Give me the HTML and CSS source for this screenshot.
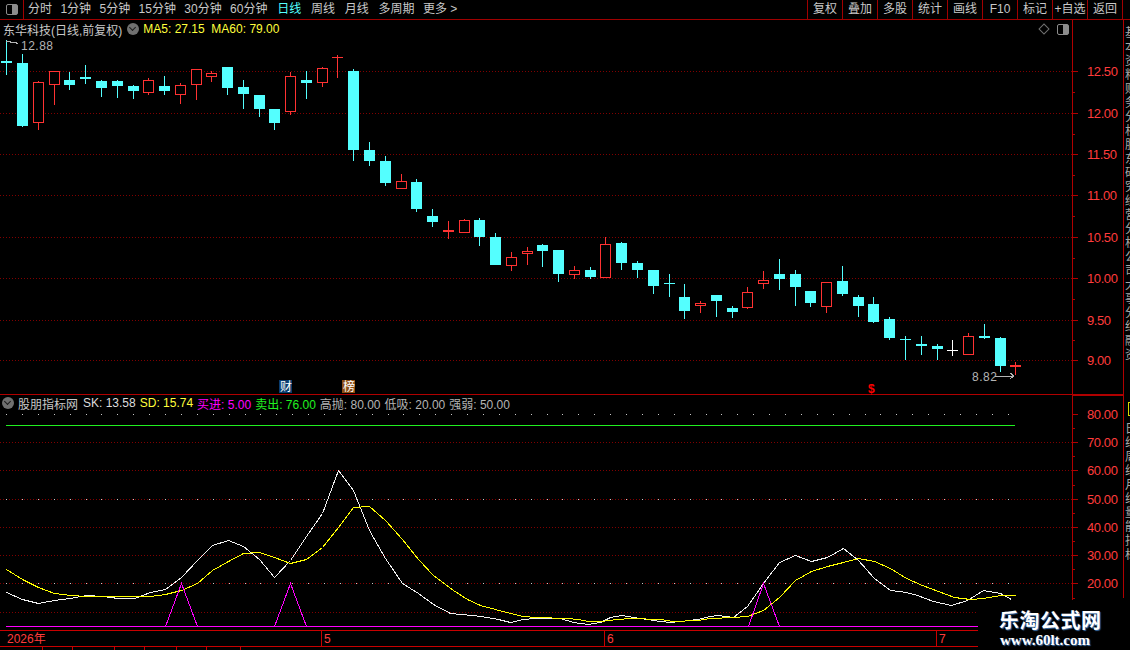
FILE: index.html
```html
<html>
	<head>
		<title>东华科技</title>
		<link rel="stylesheet" href="styles.css">
	</head>
	<body>
		<div class="app">
			<div class="topbar">
				<div class="layout-btn"><span class="split-icon"></span></div>
				<div class="periods">
					<span class="period">分时</span>
					<span class="period">1分钟</span>
					<span class="period">5分钟</span>
					<span class="period">15分钟</span>
					<span class="period">30分钟</span>
					<span class="period wide">60分钟</span>
					<span class="period active wide">日线</span>
					<span class="period wide">周线</span>
					<span class="period wide">月线</span>
					<span class="period">多周期</span>
					<span class="period">更多 &gt;</span>
				</div>
				<div class="tools">
					<span class="tool">复权</span>
					<span class="tool">叠加</span>
					<span class="tool">多股</span>
					<span class="tool">统计</span>
					<span class="tool">画线</span>
					<span class="tool">F10</span>
					<span class="tool">标记</span>
					<span class="tool">+自选</span>
					<span class="tool">返回</span>
				</div>
			</div>
			<div class="workspace">
				<div class="plots">
					<div class="legend legend-main">
						<span class="stock-name">东华科技(日线,前复权)</span>
						<span class="chevron"></span>
						<span class="yellow">MA5: 27.15&nbsp;&nbsp;MA60: 79.00</span>
						<span class="legend-icons">
							<span class="diamond"></span>
							<span class="split-icon"></span>
						</span>
					</div>
					<svg id="price-chart" class="chart chart-main" viewBox="0 40 1123 354"></svg>
					<div class="legend legend-sub">
						<span class="chevron"></span>
						<span class="indicator-name">股朋指标网</span>
						<span class="white">SK: 13.58</span>
						<span class="yellow">SD: 15.74</span>
						<span class="magenta">买进: 5.00</span>
						<span class="green">卖出: 76.00</span>
						<span class="grey">高抛: 80.00</span>
						<span class="grey">低吸: 20.00</span>
						<span class="grey">强弱: 50.00</span>
					</div>
					<svg id="index-chart" class="chart chart-sub" viewBox="0 412 1123 218"></svg>
					<div class="timeline">
						<span class="time-cell year">2026年</span>
						<span class="time-cell may">5</span>
						<span class="time-cell june">6</span>
						<span class="time-cell july">7</span>
					</div>
					<div class="bottom-tabs">
						<span class="bottom-tab w43"></span>
						<span class="bottom-tab w30"></span>
						<span class="bottom-tab w42"></span>
						<span class="bottom-tab w30"></span>
						<span class="bottom-tab w32"></span>
						<span class="bottom-tab w30"></span>
						<span class="bottom-tab w34"></span>
					</div>
				</div>
				<div class="side-strip">
					<div class="side-text">基本资料财务分析股东研究经营分析公司大事分红融资</div>
					<div class="side-flag"></div>
					<div class="side-text side-text-low">日线周线月线量能指标</div>
				</div>
			</div>
			<div class="watermark">
				<div class="watermark-title">乐淘公式网</div>
				<div class="watermark-url">www.60lt.com</div>
			</div>
		</div>
		<script src="chart.js"></script>
	</body>
</html>
```

FILE: styles.css
```css
body {
	margin: 0px;
	background: #000;
}
.app {
	position: relative;
	width: 1130px;
	height: 650px;
	overflow: hidden;
	background: #000;
	color: #c8c8c8;
	font-family: "Liberation Sans", "Noto Sans CJK SC", sans-serif;
	font-size: 12px;
}
.topbar {
	display: flex;
	height: 19px;
	line-height: 19px;
	border-bottom: 1px solid #a00000;
}
.layout-btn {
	display: flex;
	align-items: center;
	justify-content: center;
	width: 23px;
	border-right: 1px solid #a00000;
}
.split-icon {
	display: block;
	box-sizing: border-box;
	width: 12px;
	height: 11px;
	border: 1px solid #8c8c8c;
	border-radius: 2px;
	background: linear-gradient(to right, #000 50%, #8c8c8c 50%);
}
.periods {
	display: flex;
	gap: 8.4px;
	padding-left: 4px;
}
.wide {
	margin-right: 1.4px;
}
.active {
	color: #54ffff;
}
.tools {
	display: flex;
	margin-left: auto;
	margin-right: 7px;
	border-right: 1px solid #a00000;
}
.tool {
	width: 34px;
	text-align: center;
	border-left: 1px solid #a00000;
}
.workspace {
	display: flex;
	height: 630px;
}
.plots {
	width: 1123px;
}
.legend {
	display: flex;
	align-items: center;
	box-sizing: border-box;
	width: 1073px;
	border-right: 1px solid #b00000;
	white-space: nowrap;
}
.legend-main {
	height: 20px;
	padding-left: 3px;
	padding-bottom: 2px;
}
.legend-sub {
	height: 17px;
	padding-left: 2px;
	padding-bottom: 1px;
	gap: 4px;
}
.stock-name {
	margin-right: 5px;
}
.yellow {
	color: #ffff3c;
}
.white {
	color: #dcdcdc;
}
.magenta {
	color: #ff00ff;
}
.green {
	color: #20f020;
}
.grey {
	color: #b4b4b4;
}
.indicator-name {
	margin-right: 1px;
}
.chevron {
	position: relative;
	display: block;
	width: 12px;
	height: 12px;
	margin-right: 4px;
	border-radius: 50%;
	background: #707070;
}
.chevron::after {
	content: "";
	position: absolute;
	left: 3px;
	top: 2px;
	width: 4px;
	height: 4px;
	border-right: 1px solid #1c1c1c;
	border-bottom: 1px solid #1c1c1c;
	transform: rotate(45deg);
}
.legend-sub .chevron {
	margin-right: 0;
}
.legend-icons {
	display: flex;
	align-items: center;
	gap: 9px;
	margin-left: auto;
	margin-right: 3px;
}
.diamond {
	display: block;
	width: 6px;
	height: 6px;
	border: 1px solid #707070;
	transform: rotate(45deg);
}
.chart {
	display: block;
	width: 1123px;
	overflow: visible;
	shape-rendering: crispEdges;
}
.chart-main {
	height: 354px;
	border-bottom: 1px solid #b00000;
}
.chart-sub {
	height: 218px;
}
.chart text {
	font-family: "Liberation Sans", "Noto Sans CJK SC", sans-serif;
	font-size: 12px;
}
.chart .axis-label {
	fill: #ff3c3c;
	font-size: 13px;
	letter-spacing: -0.4px;
}
.note {
	fill: #b4b4b4;
	letter-spacing: 0.5px;
}
.badge-text {
	fill: #fff;
}
.dollar {
	fill: #ff0000;
	font-weight: bold;
}
.timeline {
	display: flex;
	box-sizing: border-box;
	height: 17px;
	line-height: 16px;
	border-top: 1px solid #c80000;
	border-bottom: 1px solid #c80000;
	color: #ff3c3c;
}
.time-cell {
	box-sizing: border-box;
	padding-left: 2px;
	border-left: 1px solid #c80000;
}
.year {
	width: 321px;
	padding-left: 7px;
	border-left: 0;
}
.may {
	width: 283px;
}
.june {
	width: 332px;
}
.july {
	width: 42px;
}
.bottom-tabs {
	display: flex;
	height: 3px;
}
.bottom-tab {
	border-right: 1px solid #c80000;
}
.w43 {
	width: 42px;
}
.w30 {
	width: 29px;
}
.w42 {
	width: 41px;
}
.w32 {
	width: 31px;
}
.w34 {
	width: 33px;
}
.side-strip {
	width: 6px;
	height: 578px;
	overflow: hidden;
	border-left: 1px solid #b00000;
}
.side-text {
	width: 13px;
	height: 368px;
	padding-top: 6px;
	margin-left: 1px;
	line-height: 14px;
	color: #a8a8a8;
	word-break: break-all;
	overflow: hidden;
}
.side-text-low {
	height: 176px;
}
.side-flag {
	box-sizing: border-box;
	width: 12px;
	height: 14px;
	margin: 8px 0 0 4px;
	border: 1px solid #d8d800;
}
.watermark {
	position: absolute;
	left: 978px;
	top: 600px;
	width: 152px;
	height: 50px;
	background: #000;
	color: #fff;
	text-align: left;
	padding-left: 21px;
	box-sizing: border-box;
	text-shadow: 1px 1px 1px #3a6ea8;
}
.watermark-title {
	padding-top: 7px;
	font-family: "Noto Sans CJK SC", sans-serif;
	font-size: 20px;
	font-weight: bold;
	line-height: 26px;
	letter-spacing: 0.5px;
}
.watermark-url {
	padding-left: 1px;
	font-family: "Liberation Serif", serif;
	font-size: 15px;
	font-weight: bold;
	line-height: 15px;
}
```

FILE: chart.js
```js
// Draws the candles, indicator lines and axes into the two svg panels.
var SVG_NS = 'http://www.w3.org/2000/svg';
var CYAN = '#54ffff';
var RED = '#ff3232';
var WHITE = '#f0f0f0';
var YELLOW = '#ffff00';
var MAGENTA = '#ff00ff';
var GRID = '#800000';
var AXIS = '#b00000';
var PLOT_RIGHT = 1072;

// x, body top, body bottom, wick top, wick bottom, colour (c cyan, r red, w white), thin cross if last is set
var candles = [
	[6,61,63,40,75,'c'],[22,63,126,54,127,'c'],[38,82,123,81,130,'r'],[54,71,85,71,105,'r'],
	[69,80,85,72,90,'c'],[85,77,79,65,84,'c'],[101,81,88,80,97,'c'],[117,81,86,80,98,'c'],
	[133,86,91,85,99,'c'],[148,80,93,78,95,'r'],[164,86,91,76,95,'c'],[180,85,95,83,104,'r'],
	[196,69,85,69,100,'r'],[211,73,77,71,82,'r'],[227,67,88,67,95,'c'],[243,87,94,80,109,'c'],
	[259,95,109,95,117,'c'],[274,109,123,109,130,'c'],[290,76,112,72,115,'r'],[306,80,83,71,99,'c'],
	[322,68,83,67,87,'r'],[337,57,57,55,78,'r',1],[353,71,150,69,161,'c'],[369,150,161,142,166,'c'],
	[385,161,183,156,186,'c'],[401,181,189,174,189,'r'],[416,182,209,179,212,'c'],[432,216,222,209,227,'c'],
	[448,230,232,221,239,'r'],[464,220,233,219,233,'r'],[479,220,237,218,246,'c'],[495,237,265,233,265,'c'],
	[511,257,266,252,271,'r'],[527,251,254,247,265,'r'],[542,245,251,244,267,'c'],[558,250,274,250,282,'c'],
	[574,270,275,266,279,'r'],[590,270,277,267,279,'c'],[605,244,278,237,278,'r'],[621,243,263,242,270,'c'],
	[637,263,270,261,278,'c'],[653,270,286,270,294,'c'],[669,283,283,274,297,'c',1],[684,297,311,284,319,'c'],
	[700,303,306,301,313,'r'],[716,295,301,295,317,'c'],[732,308,312,306,318,'c'],[747,292,308,287,309,'r'],
	[763,280,284,271,289,'r'],[779,274,279,259,290,'c'],[795,274,287,270,306,'c'],[810,291,303,291,307,'c'],
	[826,282,307,282,313,'r'],[842,281,294,266,296,'c'],[858,297,306,295,317,'c'],[873,304,322,297,323,'c'],
	[889,319,338,317,340,'c'],[905,339,339,336,360,'c',1],[921,344,346,336,355,'c'],[937,346,349,344,360,'c'],
	[952,350,350,340,356,'w',1],[968,336,355,333,355,'r'],[984,336,338,324,339,'c'],[1000,338,366,337,372,'c'],
	[1015,365,367,362,375,'r']
];

var sk = [6,592,22,599,38,603,54,600,70,598,86,595,102,596,118,598,134,598,150,592,165,589,181,577,197,560,212,545,228,540,243,546,259,559,274,577,290,560,306,536,322,513,338,470,353,490,369,530,385,558,402,583,418,593,433,604,450,613,460,614,473,615,487,617,498,619,510,622,523,619,535,618,560,618,573,622,588,624,600,622,610,617,622,615,633,617,647,619,660,621,670,622,680,621,697,619,710,616,717,615,733,617,747,606,763,583,779,562,795,555,811,561,827,557,843,548,858,560,874,578,890,590,906,592,917,595,933,601,951,605,967,600,983,590,1000,593,1011,599];

var sd = [6,569,22,579,38,587,54,593,70,595,86,596,102,596,118,596,134,596,150,596,165,594,181,590,197,583,212,570,228,561,243,553,259,552,274,557,290,563,306,559,322,547,338,527,353,507,369,506,385,520,402,539,418,559,433,575,453,590,467,599,480,605,495,609,510,613,523,616,535,617,567,618,578,619,588,621,600,621,617,619,630,618,660,619,673,621,697,620,710,618,733,617,747,616,763,610,779,597,795,580,811,571,827,566,843,562,858,558,874,561,890,568,906,578,922,585,938,591,954,597,970,599,983,598,1000,595,1015,595];

// the three buy signals rise from the base line
var peaks = [[165,181,197],[274,290,306],[748,763,779]];
var SIGNAL_BASE = 626;
var SIGNAL_TOP = 583;

// Creates an svg element with the given attributes and appends it to the parent
function add(parent, name, attrs, text) {
	var el = document.createElementNS(SVG_NS, name);
	for (var key in attrs) {
		el.setAttribute(key, attrs[key]);
	}
	if (text) {
		el.textContent = text;
	}
	parent.appendChild(el);
	return el;
}

function hline(svg, y, x1, x2, colour, dash) {
	var attrs = { x1: x1, x2: x2, y1: y + 0.5, y2: y + 0.5, stroke: colour };
	if (dash) {
		attrs['stroke-dasharray'] = dash;
	}
	add(svg, 'line', attrs);
}

function vline(svg, x, y1, y2, colour) {
	add(svg, 'rect', { x: x, y: y1, width: 1, height: y2 - y1, fill: colour });
}

function drawCandle(svg, c) {
	var colour = c[5] == 'c' ? CYAN : (c[5] == 'r' ? RED : '#fff');
	vline(svg, c[0], c[3], c[4], colour);
	if (c[6]) {
		add(svg, 'rect', { x: c[0] - 5, y: c[1], width: 11, height: 1, fill: colour });
	} else if (c[5] == 'c' || c[2] - c[1] < 3) {
		add(svg, 'rect', { x: c[0] - 5, y: c[1], width: 11, height: c[2] - c[1], fill: colour });
	} else {
		add(svg, 'rect', { x: c[0] - 4.5, y: c[1] + 0.5, width: 10, height: c[2] - c[1] - 1, fill: '#000', stroke: colour });
	}
}

function drawAxis(svg, rows, top, bottom) {
	vline(svg, PLOT_RIGHT, top, bottom, AXIS);
	rows.forEach(function(row, i) {
		add(svg, 'rect', { x: PLOT_RIGHT + 1, y: row.y, width: 5, height: 1, fill: AXIS });
		if (i < rows.length - 1) {
			add(svg, 'rect', { x: PLOT_RIGHT + 1, y: Math.round((row.y + rows[i + 1].y) / 2), width: 2, height: 1, fill: AXIS });
		}
		if (row.label) {
			add(svg, 'text', { x: 1087, y: row.y + 5, 'class': 'axis-label' }, row.label);
		}
	});
}

function line(svg, points, colour) {
	var shifted = points.map(function(v) {
		return v + 0.5;
	});
	add(svg, 'polyline', { points: shifted.join(' '), fill: 'none', stroke: colour, 'stroke-width': 1 });
}

function drawPrice() {
	var svg = document.getElementById('price-chart');
	var rows = [[71,'12.50'],[113,'12.00'],[154,'11.50'],[195,'11.00'],[237,'10.50'],[278,'10.00'],[320,'9.50'],[360,'9.00']];
	rows = rows.map(function(r) {
		hline(svg, r[0], 0, PLOT_RIGHT, GRID, '1 2');
		return { y: r[0], label: r[1] };
	});
	candles.forEach(function(c) {
		drawCandle(svg, c);
	});
	drawAxis(svg, rows, 40, 394);

	// high and low notes
	add(svg, 'path', { d: 'M6 41H9L12 43L15 42L18 44', fill: 'none', stroke: '#b4b4b4' });
	add(svg, 'text', { x: 21, y: 50, 'class': 'note' }, '12.88');
	add(svg, 'text', { x: 972, y: 381, 'class': 'note' }, '8.82');
	add(svg, 'path', { d: 'M995 376H1013M1010 373L1014 376L1010 379', fill: 'none', stroke: '#b4b4b4' });

	// event badges
	add(svg, 'rect', { x: 279, y: 380, width: 13, height: 13, fill: '#0a3c6e' });
	add(svg, 'text', { x: 280, y: 391, 'class': 'badge-text' }, '财');
	add(svg, 'rect', { x: 342, y: 380, width: 13, height: 13, fill: '#8c4e14' });
	add(svg, 'text', { x: 343, y: 391, 'class': 'badge-text' }, '榜');
	add(svg, 'text', { x: 868, y: 393, 'class': 'dollar' }, '$');
}

function drawIndex() {
	var svg = document.getElementById('index-chart');
	var rows = [[414,'80.00'],[442,'70.00'],[470,'60.00'],[499,'50.00'],[527,'40.00'],[555,'30.00'],[583,'20.00'],[612,'']];
	rows = rows.map(function(r) {
		if (r[0] != 414) {
			hline(svg, r[0], 0, PLOT_RIGHT, GRID, '1 2');
		}
		return { y: r[0], label: r[1] };
	});
	[414, 499, 583].forEach(function(y) {
		for (var x = 6; x < 1020; x += 15.9) {
			add(svg, 'rect', { x: Math.round(x), y: y, width: 1, height: 1, fill: '#c8c8c8' });
		}
	});
	drawAxis(svg, rows, 412, 630);
	add(svg, 'rect', { x: 1073, y: 395, width: 50, height: 1, fill: AXIS });
	hline(svg, 425, 6, 1015, '#20f020');
	line(svg, sk, WHITE);
	line(svg, sd, YELLOW);

	add(svg, 'rect', { x: 6, y: SIGNAL_BASE, width: 972, height: 1, fill: MAGENTA });
	peaks.forEach(function(p) {
		line(svg, [p[0], SIGNAL_BASE, p[1], SIGNAL_TOP, p[2], SIGNAL_BASE], MAGENTA);
	});
}

drawPrice();
drawIndex();
```
